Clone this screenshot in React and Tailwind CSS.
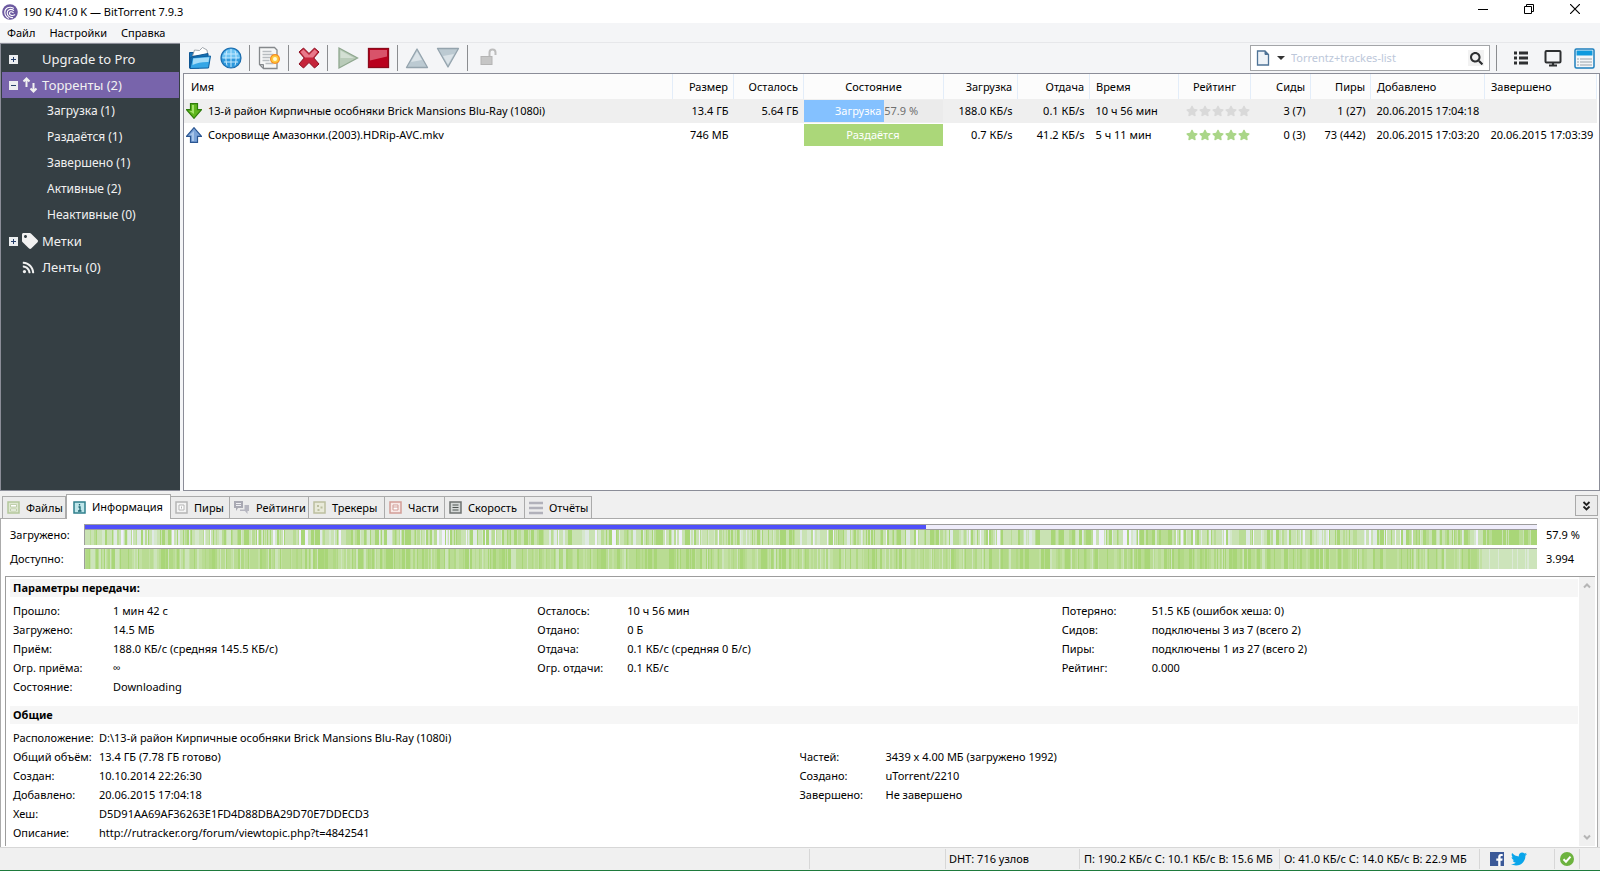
import { useState } from 'react'
import { FaFacebookF, FaRss, FaSearch, FaStar, FaTag, FaTwitter } from 'react-icons/fa'

const NAV_FILTERS = ['Загрузка (1)', 'Раздаётся (1)', 'Завершено (1)', 'Активные (2)', 'Неактивные (0)']

const COLUMNS = [
  { key: 'name', label: 'Имя', cls: 'text-left pl-[7px]' },
  { key: 'size', label: 'Размер', cls: 'w-[61px] text-right pr-[5px]' },
  { key: 'left', label: 'Осталось', cls: 'w-[70px] text-right pr-[5px]' },
  { key: 'state', label: 'Состояние', cls: 'w-[140px] text-center' },
  { key: 'down', label: 'Загрузка', cls: 'w-[74px] text-right pr-[5px]' },
  { key: 'up', label: 'Отдача', cls: 'w-[72px] text-right pr-[5px]' },
  { key: 'eta', label: 'Время', cls: 'w-[89px] text-left pl-[6px]' },
  { key: 'rating', label: 'Рейтинг', cls: 'w-[72px] text-center' },
  { key: 'seeds', label: 'Сиды', cls: 'w-[60px] text-right pr-[5px]' },
  { key: 'peers', label: 'Пиры', cls: 'w-[60px] text-right pr-[5px]' },
  { key: 'added', label: 'Добавлено', cls: 'w-[114px] text-left pl-[6px]' },
  { key: 'done', label: 'Завершено', cls: 'w-[112px] text-left pl-[6px]' }
]

const TORRENTS = [
  {
    name: '13-й район Кирпичные особняки Brick Mansions Blu-Ray (1080i)',
    direction: 'down',
    size: '13.4 ГБ',
    left: '5.64 ГБ',
    progress: 57.9,
    down: '188.0 КБ/s',
    up: '0.1 КБ/s',
    eta: '10 ч 56 мин',
    rated: false,
    seeds: '3 (7)',
    peers: '1 (27)',
    added: '20.06.2015 17:04:18',
    done: ''
  },
  {
    name: 'Сокровище Амазонки.(2003).HDRip-AVC.mkv',
    direction: 'up',
    size: '746 МБ',
    left: '',
    progress: 100,
    down: '0.7 КБ/s',
    up: '41.2 КБ/s',
    eta: '5 ч 11 мин',
    rated: true,
    seeds: '0 (3)',
    peers: '73 (442)',
    added: '20.06.2015 17:03:20',
    done: '20.06.2015 17:03:39'
  }
]

const TABS = [
  { label: 'Файлы', icon: 'files', cls: 'w-[64px]' },
  { label: 'Информация', icon: 'info', cls: 'w-[105px]' },
  { label: 'Пиры', icon: 'peers', cls: 'w-[59px]' },
  { label: 'Рейтинги', icon: 'ratings', cls: 'w-[79px]' },
  { label: 'Трекеры', icon: 'trackers', cls: 'w-[76px]' },
  { label: 'Части', icon: 'pieces', cls: 'w-[60px]' },
  { label: 'Скорость', icon: 'speed', cls: 'w-[80px]' },
  { label: 'Отчёты', icon: 'logs', cls: 'w-[67px]' }
]

const TRANSFER = [
  [
    ['Прошло:', '1 мин 42 с'],
    ['Загружено:', '14.5 МБ'],
    ['Приём:', '188.0 КБ/с (средняя 145.5 КБ/с)'],
    ['Огр. приёма:', '∞'],
    ['Состояние:', 'Downloading']
  ],
  [
    ['Осталось:', '10 ч 56 мин'],
    ['Отдано:', '0 Б'],
    ['Отдача:', '0.1 КБ/с (средняя 0 Б/с)'],
    ['Огр. отдачи:', '0.1 КБ/с']
  ],
  [
    ['Потеряно:', '51.5 КБ (ошибок хеша: 0)'],
    ['Сидов:', 'подключены 3 из 7 (всего 2)'],
    ['Пиры:', 'подключены 1 из 27 (всего 2)'],
    ['Рейтинг:', '0.000']
  ]
]

const GENERAL = [
  [
    ['Расположение:', 'D:\\13-й район Кирпичные особняки Brick Mansions Blu-Ray (1080i)'],
    ['Общий объём:', '13.4 ГБ (7.78 ГБ готово)'],
    ['Создан:', '10.10.2014 22:26:30'],
    ['Добавлено:', '20.06.2015 17:04:18'],
    ['Хеш:', 'D5D91AA69AF36263E1FD4D88DBA29D70E7DDECD3'],
    ['Описание:', 'http://rutracker.org/forum/viewtopic.php?t=4842541']
  ],
  [
    ['Частей:', '3439 x 4.00 МБ (загружено 1992)'],
    ['Создано:', 'uTorrent/2210'],
    ['Завершено:', 'Не завершено']
  ]
]

// Piece maps: short runs in a random shade, the tail has its own palette
const MAP_WIDTH = 1453
const TAIL_START = 1396

const buildPieces = (seed, colors, tailColors) => {
  let s = seed
  const rand = () => {
    s = (s * 1103515245 + 12345) % 2147483648
    return s / 2147483648
  }
  const pieces = []
  let x = 0
  while (x < MAP_WIDTH) {
    const palette = x > TAIL_START ? tailColors : colors
    const w = 1 + Math.floor(rand() * rand() * 4)
    pieces.push({ x, w, fill: palette[Math.floor(rand() * palette.length)] })
    x += w
  }
  return pieces
}

const DOWNLOADED = buildPieces(
  77,
  ['#a9d678', '#a9d678', '#a9d678', '#c9e2b3', '#c9e2b3', '#c9e2b3', '#b9dc95', '#b9dc95', '#d5e7cc', '#c9e2b3', '#c9e2b3', '#f0effb', '#dfe9e4'],
  ['#a9d678', '#a9d678', '#a9d678', '#a9d678', '#a9d678', '#b9dc95', '#c9e2b3']
)
const AVAILABLE = buildPieces(
  4021,
  ['#a9d678', '#a9d678', '#b9dc93', '#b9dc93', '#b9dc93', '#b1d985', '#c2e0a3', '#b9dc93', '#c2e0a3', '#cde4bb'],
  ['#cde4bb', '#cde4bb', '#cde4bb', '#cde4bb', '#cde4bb', '#dbe9d6']
)

const PieceMap = ({ pieces, label }) => (
  <svg
    role="img"
    aria-label={label}
    className="block w-full h-full"
    viewBox={`0 0 ${MAP_WIDTH} 1`}
    preserveAspectRatio="none"
    shapeRendering="crispEdges"
  >
    {pieces.map((p) => (
      <rect key={p.x} x={p.x} y="0" width={p.w} height="1" fill={p.fill} />
    ))}
  </svg>
)

const Logo = () => (
  <svg className="w-4 h-4" viewBox="0 0 16 16" fill="none">
    <circle cx="8" cy="8" r="7.8" fill="#6c59a0" />
    <g stroke="#fff" strokeWidth="1.1" strokeLinecap="round">
      <path d="M11.5 4.2C7.5 1.8 2.6 4.2 2.8 8.6c.1 2.6 1.6 4.6 3.6 5.7" />
      <path d="M11.6 6.4C8.6 4.2 5 5.8 5.2 9c.1 2.6 2.4 4.8 5.4 4.6" />
      <path d="M11.2 8.6C9.4 7 7.4 7.8 7.5 9.5c.1 1.7 2.5 2.7 5.2 1.3" />
    </g>
  </svg>
)

const FolderIcon = () => (
  <svg className="w-6 h-6" viewBox="0 0 24 24">
    <path d="M1.5 6.5h5L8 8h3v14H1.5z" fill="#1b74b8" stroke="#0f5793" />
    <path d="M4.500 10 6.500 4l5 .5 3-3 4.500 2.500 1 6z" fill="#fff" stroke="#8a9299" strokeWidth=".8" />
    <path d="M2 12l3-1.500 15-3V20.500L2 22z" fill="#1471b5" stroke="#0f5793" />
    <path d="M4.500 11.500l18-1.500-2 12-18.500.5z" fill="#35a6e6" stroke="#0f5f9f" />
    <path d="M5.300 12.500l16-1.300-.8 4.800c-6.500-.2-11.500 1-16 3z" fill="#a4dcf8" />
  </svg>
)

const GlobeIcon = () => (
  <svg className="w-6 h-6" viewBox="0 0 24 24">
    <circle cx="12" cy="12" r="10" fill="#2d98dc" stroke="#1b6cae" strokeWidth="1.2" />
    <path d="M3 12a9 9 0 0 1 18 0z" fill="#6cc3f2" />
    <path
      d="M5 8h14M3.500 12h17M5 16h14M8 4.500C6.500 9 6.500 15 8 19.500M12 3v18M16 4.500c1.500 4.500 1.500 10.500 0 15"
      fill="none"
      stroke="#c6eaff"
    />
  </svg>
)

const NewTorrentIcon = () => (
  <svg className="w-6 h-6" viewBox="0 0 24 24">
    <path d="M2.500 1.500h15l2.500 2.500v18.500H6.500l-4-4z" fill="#f6f7f7" stroke="#85898c" strokeWidth="1.3" />
    <path d="M2.500 18.500h4v4z" fill="#b9bdc0" stroke="#85898c" />
    <path d="M5.500 5.500h9M5.500 8.500h11M5.500 11.500h8M5.500 14.500h7M8.500 17.500h8" stroke="#b7bcbf" strokeWidth="1.3" />
    <circle cx="18" cy="13" r="5" fill="#f58a1f" />
    <circle cx="18" cy="13" r="3.8" fill="#ffc83c" />
    <circle cx="18" cy="13" r="2" fill="#fffbd8" />
  </svg>
)

const RemoveIcon = () => (
  <svg className="w-6 h-6" viewBox="0 0 24 24">
    <path
      d="M3 6 7.500 2 13 7.500 18.500 2 23 6l-5.200 6 5.200 6-4.500 4L13 16.500 7.500 22 3 18l5.200-6z"
      fill="#c5243a"
      stroke="#8c0d20"
      strokeLinejoin="round"
    />
    <path d="M4.500 6l3-2.500L13 9l5.500-5.500 3 2.500-4.500 5.500H9z" fill="#e8798a" />
  </svg>
)

const PlayIcon = () => (
  <svg className="w-6 h-6" viewBox="0 0 24 24">
    <path d="M4 2v20l18.500-10z" fill="#b9cbb9" stroke="#8fa78f" strokeWidth="1.3" />
    <path d="M5.500 4.500V12h13.500z" fill="#d3dfd3" />
  </svg>
)

const StopIcon = () => (
  <svg className="w-6 h-6" viewBox="0 0 24 24">
    <rect x="2.500" y="2.500" width="20" height="19" fill="#b9001d" stroke="#8a0a1b" strokeWidth="1.3" />
    <path d="M4 4h17v6.500L4 14.500z" fill="#d8536a" />
  </svg>
)

const TriangleIcon = ({ down }) => (
  <svg className={down ? 'w-6 h-6 rotate-180' : 'w-6 h-6'} viewBox="0 0 24 24">
    <path d="M12 3 1.500 21.500h21z" fill="#bccad2" stroke="#94a3ad" strokeWidth="1.3" strokeLinejoin="round" />
    <path d="M12 5.500 6 16l11-2z" fill="#dbe3e8" />
  </svg>
)

const LockIcon = () => (
  <svg className="w-6 h-6" viewBox="0 0 24 24">
    <rect x="6" y="10.500" width="11" height="8" fill="#c6c6c6" stroke="#b4b4b4" />
    <path d="M14.500 10V6.500a3 3 0 0 1 6 0V9" fill="none" stroke="#bdbdbd" strokeWidth="2" />
  </svg>
)

const DirectionIcon = ({ direction }) =>
  direction === 'down' ? (
    <svg className="w-4 h-4 shrink-0" viewBox="0 0 16 16">
      <path d="M4.500.7h7v6h4L8 15.300.500 6.700h4z" fill="#5fb71e" stroke="#2f7d0c" strokeWidth="1.2" />
      <path d="M6 2h2v9L3.500 8H6z" fill="#a5e36c" />
    </svg>
  ) : (
    <svg className="w-4 h-4 shrink-0" viewBox="0 0 16 16">
      <path d="M4.500 15.300h7v-6h4L8 .7.500 9.300h4z" fill="#7ba3d8" stroke="#2b5692" strokeWidth="1.2" />
      <path d="M6 14h2V4L3.500 8.200H6z" fill="#a9c6ea" />
    </svg>
  )

const FRAME_COLORS = {
  files: ['#b4c79c', '#dfe8d3'],
  info: ['#2f7f8c', '#bfe6ea'],
  peers: ['#b5b5b5', '#f4f4f4'],
  trackers: ['#bcbf9f', '#e9ead9'],
  pieces: ['#d29d97', '#f8e9e7'],
  speed: ['#6d7270', '#d5d8d7']
}

const TabIcon = ({ icon }) => {
  if (icon === 'logs') {
    return (
      <svg className="w-[14px] h-[14px] shrink-0" viewBox="0 0 14 14">
        <path d="M0 2h14M0 7h14M0 12h14" stroke="#b1b1ba" strokeWidth="2.500" />
      </svg>
    )
  }
  if (icon === 'ratings') {
    return (
      <svg className="w-4 h-[14px] shrink-0" viewBox="0 0 16 14">
        <path d="M0 0h9v7H4l-2 3V7H0z" fill="#a9a9b3" />
        <path d="M2 2.500h5M2 4.500h5" stroke="#efeff3" />
        <path d="M10.500 4H15v6h-1.500v3l-2.500-3H6V8.500h4.500z" fill="#b6b6c0" />
      </svg>
    )
  }
  const [edge, fill] = FRAME_COLORS[icon]
  return (
    <svg className="w-[13px] h-[13px] shrink-0" viewBox="0 0 13 13">
      <rect x="1" y="1" width="11" height="11" fill={fill} stroke={edge} strokeWidth="1.500" />
      {icon === 'files' && <path d="M3.500 3.500h6v2.500h-6zM3.500 8h6v2h-6z" fill="#fff" stroke={edge} strokeWidth=".8" />}
      {icon === 'info' && <path d="M6.500 3v1.500M5.500 6h1.500v4M5 10h3.500" fill="none" stroke="#1d6672" strokeWidth="1.300" />}
      {icon === 'peers' && <path d="M4 4h5v5H4zM6.500 5.500v2" fill="#fff" stroke={edge} />}
      {icon === 'trackers' && <path d="M4 4h2v2H4zM7.500 5.500h2v2h-2zM4.500 8h2v2h-2z" fill={edge} />}
      {icon === 'pieces' && <path d="M4 4h5v5H4zM4 6h5" fill="#fff" stroke={edge} />}
      {icon === 'speed' && <path d="M3.500 4h6M3.500 6.500h6M3.500 9h6" stroke="#4f5553" strokeWidth="1.200" />}
    </svg>
  )
}

const Separator = () => <div className="w-px h-[26px] bg-[#8b8d90]" />

const ToolButton = ({ label, children }) => (
  <button type="button" aria-label={label} className="w-6 h-6 flex items-center justify-center">
    {children}
  </button>
)

const Expander = ({ open }) => (
  <svg className="w-[9px] h-[9px] shrink-0" viewBox="0 0 9 9" shapeRendering="crispEdges">
    <rect width="9" height="9" fill="#eceef0" />
    <path d="M2 4.500h5" stroke="#27406b" />
    {!open && <path d="M4.500 2v5" stroke="#27406b" />}
  </svg>
)

const NavItem = ({ expander, icon, label, active }) => (
  <button
    type="button"
    className={`w-full h-[26px] pl-[7px] flex items-center text-[13px] text-[#f1f1f1] ${active ? 'bg-[#7864ab]' : ''}`}
  >
    <span className="w-[13px] flex">{expander}</span>
    <span className="w-[20px] flex">{icon}</span>
    {label}
  </button>
)

const Sidebar = () => (
  <nav className="w-[180px] shrink-0 bg-[#353f44] border-l border-t border-b border-[#8b8d98] px-px pt-[2px]">
    <NavItem expander={<Expander />} label="Upgrade to Pro" />
    <NavItem
      active
      expander={<Expander open />}
      icon={
        <svg className="w-4 h-4" viewBox="0 0 16 16" fill="none" stroke="#f1f1f1" strokeWidth="2">
          <path d="M4.500 10V2M1.500 4.500l3-3 3 3M11.500 6v8M8.500 11.500l3 3 3-3" />
        </svg>
      }
      label="Торренты (2)"
    />
    {NAV_FILTERS.map((f) => (
      <button key={f} type="button" className="w-full h-[26px] pl-[45px] block text-left text-xs text-[#f1f1f1]">
        {f}
      </button>
    ))}
    <NavItem expander={<Expander />} icon={<FaTag className="w-4 h-4 text-[#f1f1f1]" />} label="Метки" />
    <NavItem icon={<FaRss className="w-[13px] h-[13px] text-[#f1f1f1]" />} label="Ленты (0)" />
  </nav>
)

const Stars = ({ on }) => (
  <div className={`flex gap-px justify-end pr-px ${on ? 'text-[#aad688]' : 'text-[#d9d9d9]'}`}>
    {[1, 2, 3, 4, 5].map((n) => (
      <FaStar key={n} className="w-3 h-3" />
    ))}
  </div>
)

const StateBar = ({ progress }) => {
  if (progress === 100) {
    return <div className="h-[22px] leading-[22px] bg-[#abd779] text-white text-center">Раздаётся</div>
  }
  return (
    <div className="relative h-[22px] leading-[22px] bg-[#ebebeb] pl-[7px] text-center">
      <div className="absolute inset-y-0 left-0 bg-[#84c1ff]" style={{ width: `${progress}%` }} />
      <span className="relative text-white">Загрузка</span>
      <span className="relative text-[#6f6f6f]"> {progress} %</span>
    </div>
  )
}

const TorrentTable = () => (
  <div className="grow bg-white border border-[#8b8d98] pr-[2px]">
    <table className="w-full table-fixed border-collapse whitespace-nowrap">
      <thead>
        <tr className="h-[25px] bg-[#fcfcfc]">
          {COLUMNS.map((c) => (
            <th key={c.key} className={`font-normal p-0 border-r border-[#e3edf9] ${c.cls}`}>
              {c.label}
            </th>
          ))}
        </tr>
      </thead>
      <tbody>
        {TORRENTS.map((t, i) => (
          <tr key={t.name} className={i === 0 ? 'h-6 bg-[#efefef]' : 'h-6'}>
            <td className="p-0 pl-[2px]">
              <div className="flex items-center gap-[6px]">
                <DirectionIcon direction={t.direction} />
                {t.name}
              </div>
            </td>
            <td className="p-0 pr-[5px] text-right">{t.size}</td>
            <td className="p-0 pr-[5px] text-right">{t.left}</td>
            <td className="p-0 pr-px">
              <StateBar progress={t.progress} />
            </td>
            <td className="p-0 pr-[5px] text-right">{t.down}</td>
            <td className="p-0 pr-[5px] text-right">{t.up}</td>
            <td className="p-0 pl-[6px]">{t.eta}</td>
            <td className="p-0">
              <Stars on={t.rated} />
            </td>
            <td className="p-0 pr-[5px] text-right">{t.seeds}</td>
            <td className="p-0 pr-[5px] text-right">{t.peers}</td>
            <td className="p-0 pl-[6px]">{t.added}</td>
            <td className="p-0 pl-[6px]">{t.done}</td>
          </tr>
        ))}
      </tbody>
    </table>
  </div>
)

const Toolbar = () => (
  <div className="h-[30px] flex items-center pl-[5px]">
    <div className="flex gap-[7px]">
      <ToolButton label="Добавить торрент"><FolderIcon /></ToolButton>
      <ToolButton label="Добавить по URL"><GlobeIcon /></ToolButton>
    </div>
    <div className="flex items-center gap-[7px] pl-[6px]">
      <Separator />
      <ToolButton label="Создать торрент"><NewTorrentIcon /></ToolButton>
      <Separator />
      <ToolButton label="Удалить"><RemoveIcon /></ToolButton>
      <Separator />
      <ToolButton label="Запустить"><PlayIcon /></ToolButton>
      <ToolButton label="Остановить"><StopIcon /></ToolButton>
      <Separator />
      <ToolButton label="Вверх"><TriangleIcon /></ToolButton>
      <ToolButton label="Вниз"><TriangleIcon down /></ToolButton>
      <Separator />
      <ToolButton label="Разблокировать"><LockIcon /></ToolButton>
    </div>

    <div className="ml-auto w-[240px] h-[26px] flex items-center bg-white border border-[#a3a5a8] px-[5px]">
      <button type="button" aria-label="Поисковая система" className="flex items-center gap-[7px]">
        <svg className="w-[14px] h-4" viewBox="0 0 14 16">
          <path d="M1.500 1h7.500l3.500 3.500V15h-11z" fill="#eef3f8" stroke="#4e7396" strokeWidth="1.300" />
          <path d="M9 1v3.500h3.500z" fill="#4e7396" stroke="#4e7396" />
        </svg>
        <svg className="w-2 h-1" viewBox="0 0 8 4"><path d="M0 0h8L4 4z" fill="#333" /></svg>
      </button>
      <input
        type="text"
        aria-label="Поиск"
        placeholder="Torrentz+trackes-list"
        className="grow min-w-0 pl-[6px] outline-none placeholder:text-[#bdc8da]"
      />
      <button type="button" aria-label="Найти" className="w-4 h-4 bg-[#f2f2f2] flex items-center justify-center">
        <FaSearch className="w-[13px] h-[13px] text-[#2d2f31]" />
      </button>
    </div>
    <div className="flex items-center gap-[7px] pl-[6px] pr-1">
      <Separator />
      <button type="button" aria-label="Список" className="w-[30px] h-6 flex items-center justify-end pr-[6px]">
        <svg className="w-[14px] h-[14px]" viewBox="0 0 14 14">
          <path d="M0 2h3M5 2h9M0 7h3M5 7h9M0 12h3M5 12h9" stroke="#2d2f31" strokeWidth="3" />
        </svg>
      </button>
      <button type="button" aria-label="Монитор" className="w-6 h-6 flex items-center justify-center">
        <svg className="w-[18px] h-[18px]" viewBox="0 0 18 18" fill="none" stroke="#2d2f31">
          <rect x="1.500" y="2" width="15" height="11.500" rx="1" strokeWidth="2" />
          <path d="M9 13v3M5 16.500h8" strokeWidth="2.200" />
        </svg>
      </button>
      <button type="button" aria-label="Подробности" className="w-6 h-6 flex items-center justify-center">
        <svg className="w-[21px] h-[21px]" viewBox="0 0 21 21">
          <rect x="1" y="1" width="19" height="19" rx="1.500" fill="#f4f6f8" stroke="#1d7fbd" strokeWidth="1.500" />
          <path d="M2.500 2.500h16v5h-16z" fill="#0f9ade" />
          <path d="M3 11h2M6 11h12M3 14h2M6 14h12M3 17h2M6 17h12" stroke="#9aa3aa" />
        </svg>
      </button>
    </div>
  </div>
)

const InfoRow = ({ label, value, labelCls }) => (
  <div className="flex h-[19px] items-center whitespace-nowrap">
    <dt className={`shrink-0 ${labelCls}`}>{label}</dt>
    <dd>{value}</dd>
  </div>
)

const InfoPanel = () => (
  <div className="border-l border-t border-[#9d9d9d] ml-1 mr-[2px] flex">
    <div className="grow min-w-0 pt-[2px] pl-1 pr-px pb-1">
      <h2 className="h-[18px] leading-[18px] bg-[#f6f6f6] pl-[3px] font-bold">Параметры передачи:</h2>
      <div className="grid grid-cols-3 pt-1 pl-[3px] pb-[10px] -mr-2">
        {TRANSFER.map((col, i) => (
          <dl key={i}>
            {col.map(([label, value]) => (
              <InfoRow key={label} label={label} value={value} labelCls={i === 0 ? 'w-[100px]' : 'w-[90px]'} />
            ))}
          </dl>
        ))}
      </div>
      <h2 className="h-[18px] leading-[18px] bg-[#f6f6f6] pl-[3px] font-bold">Общие</h2>
      <div className="grid grid-cols-2 pt-1 pl-[3px] -mr-2">
        {GENERAL.map((col, i) => (
          <dl key={i} className={i === 1 ? 'pt-[19px]' : ''}>
            {col.map(([label, value]) => (
              <InfoRow key={label} label={label} value={value} labelCls="w-[86px]" />
            ))}
          </dl>
        ))}
      </div>
    </div>
    <div className="w-4 bg-[#f0f0f0] flex flex-col justify-between items-center py-[5px]">
      <svg className="w-2 h-2" viewBox="0 0 8 8"><path d="M1 5.500 4 2.500l3 3" fill="none" stroke="#b5b5b5" strokeWidth="2" /></svg>
      <svg className="w-2 h-2" viewBox="0 0 8 8"><path d="M1 2.500l3 3 3-3" fill="none" stroke="#b5b5b5" strokeWidth="2" /></svg>
    </div>
  </div>
)

const DetailsPane = () => {
  const [tab, setTab] = useState('Информация')

  return (
    <div className="bg-[#f0f0f0] pt-[3px] pr-[2px]">
      <div className="flex items-end pl-[2px]">
        {TABS.map((t) => {
          const active = t.label === tab
          return (
            <button
              key={t.label}
              type="button"
              onClick={() => setTab(t.label)}
              className={`${t.cls} flex items-center gap-[6px] pl-1 whitespace-nowrap border-t border-r border-[#ababab] ${
                active ? 'relative -mb-px h-[25px] border-l bg-white pl-[6px]' : 'h-[22px] bg-[#ececec] first:border-l'
              }`}
            >
              <TabIcon icon={t.icon} />
              {t.label}
            </button>
          )
        })}
        <button
          type="button"
          aria-label="Свернуть панель"
          className="ml-auto mb-[2px] w-[23px] h-[21px] flex items-center justify-center border border-[#a9a9a9] bg-[#ececec]"
        >
          <svg className="w-[9px] h-[10px]" viewBox="0 0 9 10" fill="none" stroke="#1f1f1f" strokeWidth="1.800">
            <path d="M1.500 1l3 3 3-3M1.500 5.500l3 3 3-3" />
          </svg>
        </button>
      </div>

      <div className="bg-white border-t border-l border-r border-[#ababab] pt-[5px] pb-px">
        <div className="flex items-center h-[21px] mb-[3px] pl-[9px]">
          <span className="w-[74px] shrink-0">Загружено:</span>
          <div className="grow h-[21px] flex flex-col border-l border-[#9d9d9d]">
            <div className="h-[6px] border-y border-[#9d9d9d] bg-[#efedfb]">
              <div className="h-full w-[57.9%] bg-[#5050fa]" />
            </div>
            <div className="h-[15px]">
              <PieceMap pieces={DOWNLOADED} label="Загруженные части" />
            </div>
          </div>
          <span className="w-[60px] shrink-0 pl-[9px]">57.9 %</span>
        </div>
        <div className="flex items-center h-[21px] mb-[7px] pl-[9px]">
          <span className="w-[74px] shrink-0">Доступно:</span>
          <div className="grow h-[21px] border-l border-t border-[#9d9d9d]">
            <PieceMap pieces={AVAILABLE} label="Доступные части" />
          </div>
          <span className="w-[60px] shrink-0 pl-[9px]">3.994</span>
        </div>
        <InfoPanel />
      </div>
    </div>
  )
}

const StatusBar = () => (
  <footer className="h-6 flex items-stretch justify-end bg-[#f0f0f0] border-t border-t-[#d7d7d7] border-b border-b-[#1e7a3c] whitespace-nowrap">
    <div className="w-[136px] my-px border-l border-[#d7d7d7]" />
    <div className="w-[134px] my-px border-l border-[#d7d7d7] pl-[3px] flex items-center">DHT: 716 узлов</div>
    <div className="w-[200px] my-px border-l border-[#d7d7d7] pl-1 flex items-center">
      П: 190.2 КБ/с С: 10.1 КБ/с В: 15.6 МБ
    </div>
    <div className="w-[200px] my-px border-l border-[#d7d7d7] pl-1 flex items-center">
      О: 41.0 КБ/с С: 14.0 КБ/с В: 22.9 МБ
    </div>
    <div className="w-[75px] my-px border-l border-[#d7d7d7] pl-[10px] flex items-center gap-[7px]">
      <a href="#facebook" aria-label="Facebook" className="w-[14px] h-[14px] bg-[#3b5998] flex items-end justify-end">
        <FaFacebookF className="w-[9px] h-3 text-white" />
      </a>
      <a href="#twitter" aria-label="Twitter">
        <FaTwitter className="w-4 h-4 text-[#0aa5ea]" />
      </a>
    </div>
    <div className="w-[25px] my-px border-l border-[#d7d7d7] flex items-center justify-center">
      <svg className="w-[14px] h-[14px]" viewBox="0 0 14 14">
        <circle cx="7" cy="7" r="7" fill="#6db33f" />
        <path d="M3.500 7.200 6 9.700l4.500-5" fill="none" stroke="#fff" strokeWidth="2" />
      </svg>
    </div>
    <div className="w-[21px] my-px border-l border-[#d7d7d7]" />
  </footer>
)

const TitleBar = () => (
  <header className="h-[23px] bg-white flex items-center px-[2px]">
    <Logo />
    <h1 className="pl-[5px]">190 K/41.0 K — BitTorrent 7.9.3</h1>
    <div className="ml-auto flex self-start">
      <button type="button" aria-label="Свернуть" className="w-[46px] h-[18px] flex items-center justify-center">
        <svg className="w-[10px] h-[10px]" viewBox="0 0 10 10"><path d="M0 5.500h10" stroke="#000" /></svg>
      </button>
      <button type="button" aria-label="Восстановить" className="w-[46px] h-[18px] flex items-center justify-center">
        <svg className="w-[10px] h-[10px]" viewBox="0 0 10 10" fill="none" stroke="#000">
          <path d="M.5 2.500h7v7h-7zM2.500 2.500v-2h7v7h-2" />
        </svg>
      </button>
      <button type="button" aria-label="Закрыть" className="w-[46px] h-[18px] flex items-center justify-center">
        <svg className="w-[10px] h-[10px]" viewBox="0 0 10 10"><path d="M0 0l10 10M10 0L0 10" stroke="#000" strokeWidth="1.200" /></svg>
      </button>
    </div>
  </header>
)

export const App = () => (
  <div className="min-h-screen flex flex-col bg-[#f4f5f7] text-black text-[11px] leading-4 font-['Noto_Sans','Open_Sans',sans-serif]">
    <TitleBar />
    <div className="h-5 flex items-center gap-[14px] pl-[7px] border-b border-[#e6e7ea]">
      <button type="button">Файл</button>
      <button type="button">Настройки</button>
      <button type="button">Справка</button>
    </div>

    <div className="grow flex gap-[3px]">
      <Sidebar />
      <div className="grow min-w-0 flex flex-col">
        <Toolbar />
        <TorrentTable />
      </div>
    </div>

    <DetailsPane />
    <StatusBar />
  </div>
)

export default App
